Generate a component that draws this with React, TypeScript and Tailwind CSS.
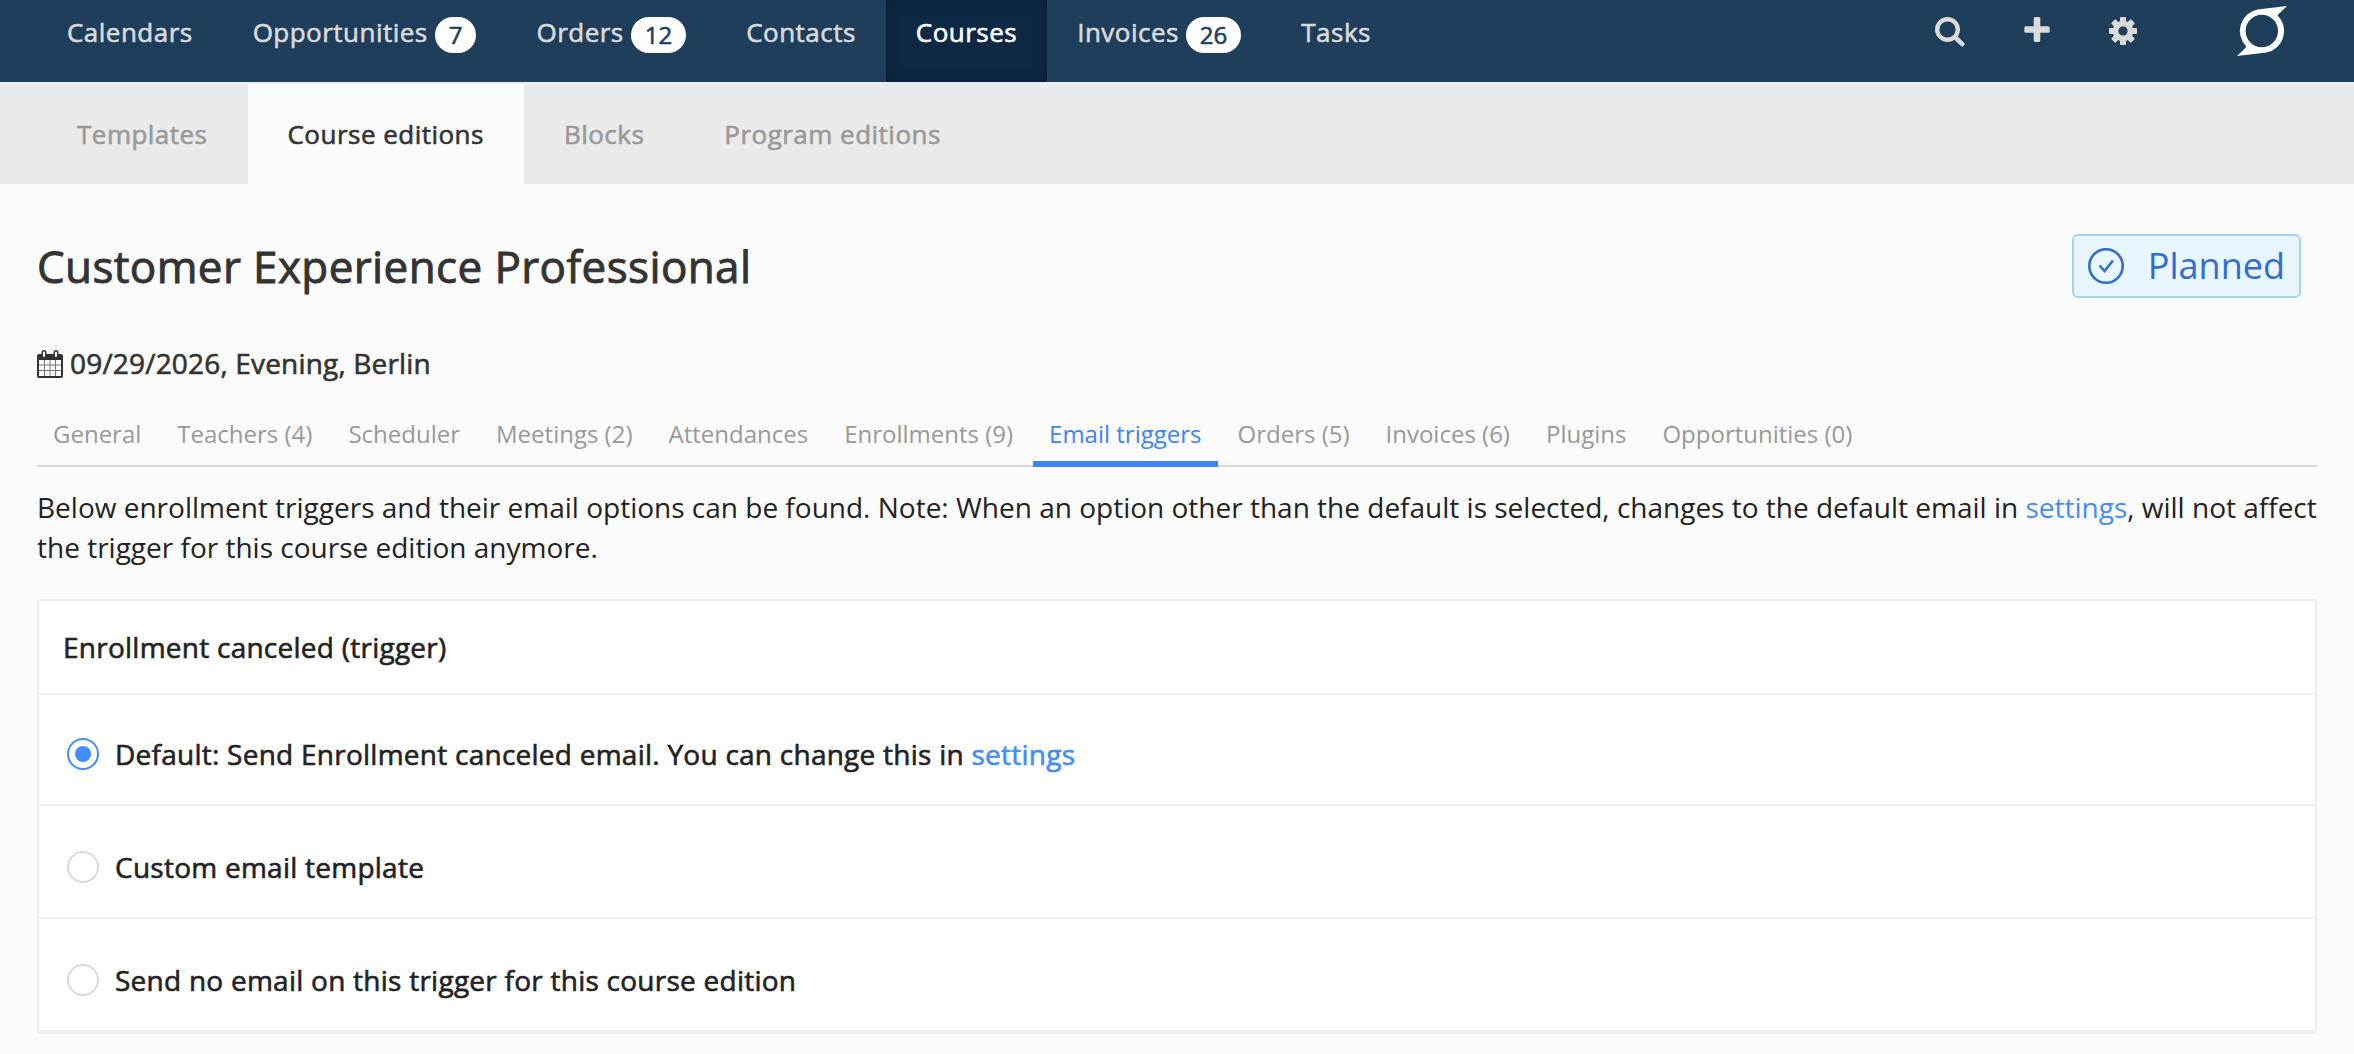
import React from 'react';

const navItems = [
  { label: 'Calendars' },
  { label: 'Opportunities', count: 7 },
  { label: 'Orders', count: 12 },
  { label: 'Contacts' },
  { label: 'Courses', active: true },
  { label: 'Invoices', count: 26 },
  { label: 'Tasks' },
];

const subNavItems = ['Templates', 'Course editions', 'Blocks', 'Program editions'];

const tabs = [
  'General',
  'Teachers (4)',
  'Scheduler',
  'Meetings (2)',
  'Attendances',
  'Enrollments (9)',
  'Email triggers',
  'Orders (5)',
  'Invoices (6)',
  'Plugins',
  'Opportunities (0)',
];

const SettingsLink = () => (
  <a href="#" className="text-[#438df9]">
    settings
  </a>
);

const options = [
  {
    id: 'default',
    label: (
      <>
        Default: Send Enrollment canceled email. You can change this in <SettingsLink />
      </>
    ),
  },
  { id: 'custom', label: 'Custom email template' },
  { id: 'none', label: 'Send no email on this trigger for this course edition' },
];

const SearchIcon = () => (
  <svg className="w-[30px] h-[30px]" viewBox="0 0 30 30" fill="none" stroke="currentColor">
    <circle cx="12.5" cy="12.5" r="10.3" strokeWidth="4.4" />
    <path d="M20.5 20.5 L27.2 27.2" strokeWidth="4.6" strokeLinecap="round" />
  </svg>
);

const PlusIcon = () => (
  <svg className="w-[26px] h-[26px]" viewBox="0 0 26 26" fill="currentColor">
    <rect x="9.7" y="0" width="6.6" height="25" rx="1.6" />
    <rect x="0.3" y="9.2" width="25.4" height="6.6" rx="1.6" />
  </svg>
);

const GearIcon = () => (
  <svg className="w-7 h-7" viewBox="0 0 28 28">
    <g fill="currentColor">
      {[0, 45, 90, 135].map((angle) => (
        <rect
          key={angle}
          x="11"
          y="0"
          width="6"
          height="28"
          rx="1"
          transform={`rotate(${angle} 14 14)`}
        />
      ))}
    </g>
    <circle cx="14" cy="14" r="7.4" fill="none" stroke="currentColor" strokeWidth="5.8" />
    <circle cx="14" cy="14" r="4.6" fill="#1e3e5c" />
  </svg>
);

const Logo = () => (
  <svg className="w-[50px] h-[50px]" viewBox="0 0 50 50">
    <path
      fill="#fff"
      fillRule="evenodd"
      d="M50 0 L20.5 3.4 A22 22 0 0 0 9.5 40.7 L0 50 L29.5 46.6 A22 22 0 0 0 40.5 9.3 Z M24.8 8.8 A16.2 16.2 0 1 1 24.8 41.2 A16.2 16.2 0 1 1 24.8 8.8 Z"
    />
  </svg>
);

const CalendarIcon = () => (
  <svg className="w-[26px] h-7" viewBox="0 0 26 28">
    <rect x="0" y="4" width="26" height="24" rx="2" fill="currentColor" />
    <rect x="2" y="10" width="22" height="16" fill="#fbfbfb" />
    <path
      d="M7.5 10v16M13 10v16M18.5 10v16M2 15h22M2 20.5h22"
      fill="none"
      stroke="#777"
      strokeWidth="1"
    />
    <g fill="#fbfbfb" stroke="currentColor" strokeWidth="1.5">
      <rect x="5.25" y="0.75" width="3.5" height="7" rx="1.75" />
      <rect x="17.25" y="0.75" width="3.5" height="7" rx="1.75" />
    </g>
  </svg>
);

const CheckCircleIcon = () => (
  <svg className="w-9 h-9" viewBox="0 0 36 36" fill="none" stroke="currentColor">
    <circle cx="18" cy="18" r="16.7" strokeWidth="2.6" />
    <path d="M11.5 17.5 L16.5 23 L25 12.5" strokeWidth="2.6" />
  </svg>
);

const App = () => {
  const [selected, setSelected] = React.useState('default');

  return (
    <div className="min-h-[1054px] bg-[#fbfbfb] font-['Open_Sans',sans-serif] text-[#222]">
      <header className="flex h-[82px] justify-between bg-[#1e3e5c] pl-[37px] text-[#dadada]">
        <nav className="flex text-[26px] leading-[64px] tracking-[0.48px] [-webkit-text-stroke:0.6px]">
          {navItems.map(({ label, count, active }) => (
            <a
              key={label}
              href="#"
              className={
                active
                  ? 'flex px-[30px] bg-[#0e2845] text-white shadow-[inset_0_0_16px_rgba(0,0,0,0.25)]'
                  : 'flex px-[30px]'
              }
            >
              {label}
              {count && (
                <span className="ml-[7px] mt-[17px] h-9 rounded-full bg-white px-[14px] text-2xl leading-9 tracking-normal text-[#1e3e5c]">
                  {count}
                </span>
              )}
            </a>
          ))}
        </nav>
        <div className="flex items-start pr-[67px]">
          <button className="mr-[59px] mt-[17px]">
            <SearchIcon />
          </button>
          <button className="mr-[59px] mt-[17px]">
            <PlusIcon />
          </button>
          <button className="mr-[100px] mt-[17px]">
            <GearIcon />
          </button>
          <a href="#" className="mt-[6px]">
            <Logo />
          </a>
        </div>
      </header>

      <nav className="flex h-[102px] bg-[#eaeaea] pl-[37px] pt-[2px] text-[26px] leading-[100px] tracking-[0.48px] text-[#999] [-webkit-text-stroke:0.6px]">
        {subNavItems.map((item) => (
          <a
            key={item}
            href="#"
            className={
              item === 'Course editions' ? 'px-[40px] bg-[#fbfbfb] text-[#333]' : 'px-[40px]'
            }
          >
            {item}
          </a>
        ))}
      </nav>

      <main className="px-[37px]">
        <div className="flex h-[116px] items-start justify-between pt-[50px] text-[#333]">
          <h1 className="text-[44px] leading-[64px] tracking-[0.38px] [-webkit-text-stroke:0.9px]">
            Customer Experience Professional
          </h1>
          <div className="mr-4 flex h-16 items-center rounded-md border-2 border-[#a0d2fb] bg-[#e8f7ff] px-[14px] text-[36px] leading-[60px] text-[#316cd3]">
            <CheckCircleIcon />
            <span className="ml-6">Planned</span>
          </div>
        </div>

        <div className="mt-11 flex h-10 items-center text-[28px] leading-[38px] text-[#333]">
          <CalendarIcon />
          <span className="ml-[7px] pb-[2px] tracking-[0.18px] [-webkit-text-stroke:0.6px]">
            09/29/2026, Evening, Berlin
          </span>
        </div>

        <nav className="mt-6 flex h-[59px] border-b-2 border-[#dadada] text-2xl leading-[52px] text-[#999]">
          {tabs.map((tab) => (
            <a
              key={tab}
              href="#"
              className={
                tab === 'Email triggers'
                  ? 'mr-1 h-[59px] border-b-[6px] border-[#3c83f6] px-4 text-[#3c83f6]'
                  : 'mr-1 px-4'
              }
            >
              {tab}
            </a>
          ))}
        </nav>

        <p className="mt-5 text-[28px] leading-10">
          Below enrollment triggers and their email options can be found. Note: When an option other
          than the default is selected, changes to the default email in <SettingsLink />, will not
          affect the trigger for this course edition anymore.
        </p>

        <section className="mt-8 rounded border-2 border-b-4 border-[#eee] bg-white text-[28px] tracking-[0.25px] [-webkit-text-stroke:0.6px]">
          <h2 className="h-[92px] pl-6 leading-[93px]">Enrollment canceled (trigger)</h2>
          {options.map(({ id, label }) => (
            <label
              key={id}
              className="flex h-[113px] items-center border-t-2 border-[#eee] pl-7 pt-[11px] first-of-type:h-[111px] first-of-type:pt-[9px]"
            >
              <input
                type="radio"
                name="trigger"
                checked={selected === id}
                onChange={() => setSelected(id)}
                className="peer sr-only"
              />
              <span className="flex h-8 w-8 items-center justify-center rounded-full border-2 border-[#d9d9d9] peer-checked:border-[#438df9]">
                {selected === id && <span className="h-4 w-4 rounded-full bg-[#438df9]" />}
              </span>
              <span className="ml-4">{label}</span>
            </label>
          ))}
        </section>
      </main>
    </div>
  );
};

export default App;
